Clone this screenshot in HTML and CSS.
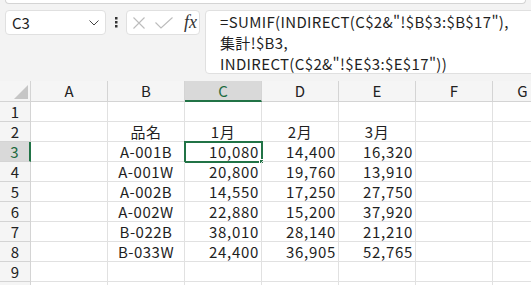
FILE: index.html
```html
<!DOCTYPE html>
<html lang="ja">
<head>
  <meta charset="UTF-8">
  <title>集計</title>
  <link rel="stylesheet" href="styles.css">
</head>
<body>
  <div class="ribbon-edge"></div>
  <div class="formula-bar">
    <div class="name-box">
      <span>C3</span>
      <svg class="chevron" width="10" height="6" viewBox="0 0 10 6"><path d="M0.5 0.5 L5 5 L9.5 0.5" fill="none" stroke="#444" stroke-width="1"/></svg>
    </div>
    <svg class="grip" width="3" height="11" viewBox="0 0 3 11"><rect x="0" y="0" width="2.5" height="2.5" fill="#333"/><rect x="0" y="4" width="2.5" height="2.5" fill="#333"/><rect x="0" y="8" width="2.5" height="2.5" fill="#333"/></svg>
    <div class="fx-buttons">
      <svg width="12" height="12" viewBox="0 0 12 12"><path d="M0.5 0.5 L11.5 11.5 M11.5 0.5 L0.5 11.5" stroke="#bcbcbc" stroke-width="1.1"/></svg>
      <svg width="18" height="12" viewBox="0 0 18 12"><path d="M0.5 5.5 L6 11 L17.5 0.5" fill="none" stroke="#bcbcbc" stroke-width="1.1"/></svg>
      <span class="fx">fx</span>
    </div>
    <div class="formula">=SUMIF(INDIRECT(C$2&amp;"!$B$3:$B$17"),<br>集計!$B3,<br>INDIRECT(C$2&amp;"!$E$3:$E$17"))</div>
  </div>

  <div class="sheet">
    <div class="hd corner"><span class="tri"></span></div>
    <div class="hd">A</div><div class="hd">B</div><div class="hd sel-col">C</div><div class="hd">D</div><div class="hd">E</div><div class="hd">F</div><div class="hd">G</div>

    <div class="rh">1</div><div></div><div></div><div></div><div></div><div></div><div></div><div></div>
    <div class="rh">2</div><div></div><div class="ctr">品名</div><div class="ctr">1月</div><div class="ctr">2月</div><div class="ctr">3月</div><div></div><div></div>
    <div class="rh sel-row">3</div><div></div><div class="ctr">A-001B</div><div class="num active">10,080<span class="handle"></span></div><div class="num">14,400</div><div class="num">16,320</div><div></div><div></div>
    <div class="rh">4</div><div></div><div class="ctr">A-001W</div><div class="num">20,800</div><div class="num">19,760</div><div class="num">13,910</div><div></div><div></div>
    <div class="rh">5</div><div></div><div class="ctr">A-002B</div><div class="num">14,550</div><div class="num">17,250</div><div class="num">27,750</div><div></div><div></div>
    <div class="rh">6</div><div></div><div class="ctr">A-002W</div><div class="num">22,880</div><div class="num">15,200</div><div class="num">37,920</div><div></div><div></div>
    <div class="rh">7</div><div></div><div class="ctr">B-022B</div><div class="num">38,010</div><div class="num">28,140</div><div class="num">21,210</div><div></div><div></div>
    <div class="rh">8</div><div></div><div class="ctr">B-033W</div><div class="num">24,400</div><div class="num">36,905</div><div class="num">52,765</div><div></div><div></div>
    <div class="rh">9</div><div></div><div></div><div></div><div></div><div></div><div></div><div></div>
    <div class="rh"></div><div></div><div></div><div></div><div></div><div></div><div></div><div></div>
  </div>
</body>
</html>
```

FILE: styles.css
```css
* {
  box-sizing: border-box;
}
html, body {
  margin: 0;
  width: 531px;
  height: 285px;
  overflow: hidden;
  background: #f3f3f3;
  font-family: "Noto Sans CJK JP", "Liberation Sans", sans-serif;
  color: #1f1f1f;
}

.ribbon-edge {
  height: 4px;
  margin: 0 5px;
  background: #fff;
  border: 1px solid #d4d4d4;
  border-top: none;
  border-radius: 0 0 5px 5px;
}

/* formula bar */
.formula-bar {
  display: flex;
  align-items: flex-start;
  padding: 6px 0 0 5px;
  height: 77px;
}
.name-box {
  width: 101px;
  height: 25px;
  display: flex;
  align-items: center;
  justify-content: space-between;
  padding: 0 6px 0 6px;
  background: #fff;
  border: 1px solid #e0e0e0;
  border-radius: 4px;
  font-size: 15px;
}
.grip {
  margin: 7px 8px 0 9px;
}
.fx-buttons {
  width: 74px;
  height: 25px;
  display: flex;
  align-items: center;
  gap: 10px;
  padding-left: 6px;
  background: #fff;
  border: 1px solid #e0e0e0;
  border-radius: 4px;
}
.fx {
  font-family: "Liberation Serif", serif;
  font-style: italic;
  font-size: 18px;
  color: #333;
  margin-left: 1px;
}
.formula {
  flex: 1;
  margin-left: 5px;
  margin-right: -8px;
  height: 64px;
  padding: 0 0 0 14px;
  background: #fff;
  border: 1px solid #e0e0e0;
  border-radius: 4px;
  font-size: 15px;
  letter-spacing: 0.35px;
  line-height: 21px;
  white-space: nowrap;
}

/* sheet grid */
.sheet {
  display: grid;
  grid-template-columns: 31px repeat(6, 77px) 60px;
  grid-template-rows: 21px repeat(10, 20px);
  background: #fff;
  font-size: 15px;
}
.sheet > div {
  border-right: 1px solid #e1e1e1;
  border-bottom: 1px solid #e1e1e1;
  line-height: 19px;
  white-space: nowrap;
  position: relative;
}
.sheet > .hd,
.sheet > .rh {
  background: #f5f5f5;
  border-color: #d4d4d4;
  text-align: center;
  color: #222;
}
.sheet > .hd {
  line-height: 20px;
}
.sheet > .sel-col {
  background: #d9d9d9;
  color: #1e6b41;
  border-bottom: 2px solid #217346;
}
.sheet > .sel-row {
  background: #d9d9d9;
  color: #1e6b41;
  border-right: 2px solid #217346;
}
.corner .tri {
  position: absolute;
  right: 2px;
  bottom: 2px;
  width: 0;
  height: 0;
  border-left: 14px solid transparent;
  border-bottom: 14px solid #c6c6c6;
}
.ctr {
  text-align: center;
  letter-spacing: 0.5px;
}
.num {
  text-align: right;
  padding-right: 2px;
  letter-spacing: 0.7px;
}
.active {
  outline: 2px solid #217346;
  outline-offset: -1px;
}
.handle {
  position: absolute;
  right: -3px;
  bottom: -3px;
  width: 5px;
  height: 5px;
  background: #217346;
  border: 1px solid #fff;
}
```
